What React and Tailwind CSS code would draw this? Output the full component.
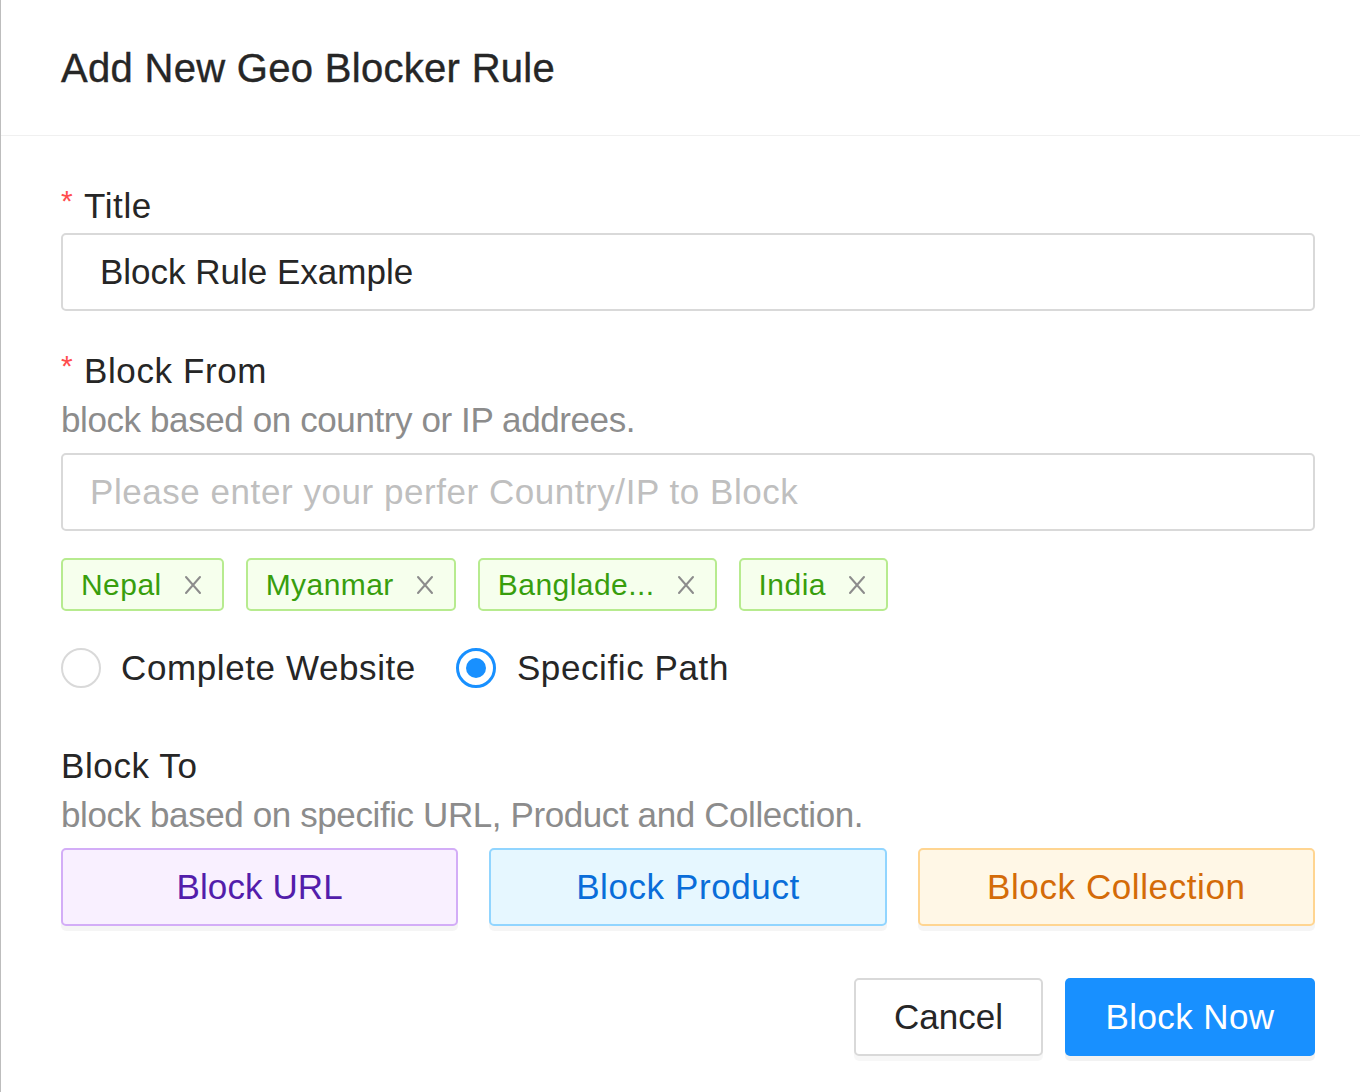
import React from "react";

const font = { fontFamily: '"Liberation Sans", Arial, sans-serif' };

function CloseIcon() {
  return (
    <svg width="18" height="20" viewBox="0 0 18 20" fill="none" className="block">
      <path d="M2 2 L16 18 M16 2 L2 18" stroke="#8c8c8c" strokeWidth="2" strokeLinecap="round" />
    </svg>
  );
}

function Tag({ children }) {
  return (
    <div className="flex h-[53px] items-center rounded-[5px] border-2 border-[#b7eb8f] bg-[#f6ffed] pl-[18px] pr-[20px] text-[30px] tracking-[0.45px] text-[#389e0d]">
      <span>{children}</span>
      <span className="ml-[22px]">
        <CloseIcon />
      </span>
    </div>
  );
}

function Label({ children, required }) {
  return (
    <div className="flex h-[52px] items-center text-[35px] tracking-[0.6px] text-[#262626]">
      {required && (
        <span className="w-[23px] self-start pt-[6px] text-[30px] leading-[30px] tracking-normal text-[#ff4d4f]">*</span>
      )}
      <span>{children}</span>
    </div>
  );
}

function Desc({ children }) {
  return (
    <div className="flex h-[46px] items-center text-[35px] tracking-[-0.4px] text-[#8c8c8c]">{children}</div>
  );
}

export default function App() {
  return (
    <div style={font} className="h-[1092px] w-[1360px] overflow-hidden border-l border-[#bdbdbd] bg-white">
      <div className="flex h-[136px] items-center border-b border-[#f0f0f0] pl-[60px] pr-[45px]">
        <h1 className="text-[40px] tracking-[0.3px] text-[#262626]" style={{ WebkitTextStroke: "0.4px #262626" }}>
          Add New Geo Blocker Rule
        </h1>
      </div>
      <div className="flex flex-col pl-[60px] pr-[45px] pt-[44px]">
        <Label required>Title</Label>
        <div className="mt-[1px] flex h-[78px] items-center rounded-[5px] border-2 border-[#d9d9d9] pl-[37px] text-[35px] text-[#262626]">
          Block Rule Example
        </div>

        <div className="mt-[34px]">
          <Label required>Block From</Label>
        </div>
        <Desc>block based on country or IP addrees.</Desc>
        <div className="mt-[10px] flex h-[78px] items-center rounded-[5px] border-2 border-[#d9d9d9] pl-[27px] text-[35px] tracking-[0.55px] text-[#bfbfbf]">
          Please enter your perfer Country/IP to Block
        </div>

        <div className="mt-[27px] flex gap-[22px]">
          <Tag>Nepal</Tag>
          <Tag>Myanmar</Tag>
          <Tag>Banglade...</Tag>
          <Tag>India</Tag>
        </div>

        <div className="mt-[37px] flex h-[40px] items-center text-[35px] tracking-[0.6px] text-[#262626]">
          <span className="h-[40px] w-[40px] rounded-full border-2 border-[#d9d9d9] bg-white" />
          <span className="ml-[20px]">Complete Website</span>
          <span className="ml-[40px] flex h-[40px] w-[40px] items-center justify-center rounded-full border-[3px] border-[#1890ff] bg-white">
            <span className="h-[20px] w-[20px] rounded-full bg-[#1890ff]" />
          </span>
          <span className="ml-[21px]">Specific Path</span>
        </div>

        <div className="mt-[52px]">
          <Label>Block To</Label>
        </div>
        <Desc>block based on specific URL, Product and Collection.</Desc>

        <div className="mt-[10px] grid grid-cols-3 gap-[31px] text-[35px] tracking-[0.6px]">
          <div className="flex h-[78px] items-center justify-center rounded-[5px] border-2 border-[#d3adf7] bg-[#f9f0ff] pt-[1px] tracking-[0.1px] text-[#531dab] shadow-[0_5px_0_rgba(0,0,0,0.04)]">
            Block URL
          </div>
          <div className="flex h-[78px] items-center justify-center rounded-[5px] border-2 border-[#91d5ff] bg-[#e6f7ff] pt-[1px] text-[#096dd9] shadow-[0_5px_0_rgba(0,0,0,0.04)]">
            Block Product
          </div>
          <div className="flex h-[78px] items-center justify-center rounded-[5px] border-2 border-[#ffd591] bg-[#fff7e6] pt-[1px] text-[#d46b08] shadow-[0_5px_0_rgba(0,0,0,0.04)]">
            Block Collection
          </div>
        </div>

        <div className="mt-[52px] flex justify-end gap-[22px] text-[35px]">
          <div className="flex h-[78px] w-[189px] items-center justify-center rounded-[5px] border-2 border-[#d9d9d9] bg-white pt-[1px] text-[#262626] shadow-[0_5px_0_rgba(0,0,0,0.03)]">
            Cancel
          </div>
          <div className="flex h-[78px] w-[250px] items-center justify-center rounded-[5px] bg-[#1890ff] pt-[1px] tracking-[0.4px] text-white shadow-[0_5px_0_rgba(0,0,0,0.05)]">
            Block Now
          </div>
        </div>
      </div>
    </div>
  );
}
